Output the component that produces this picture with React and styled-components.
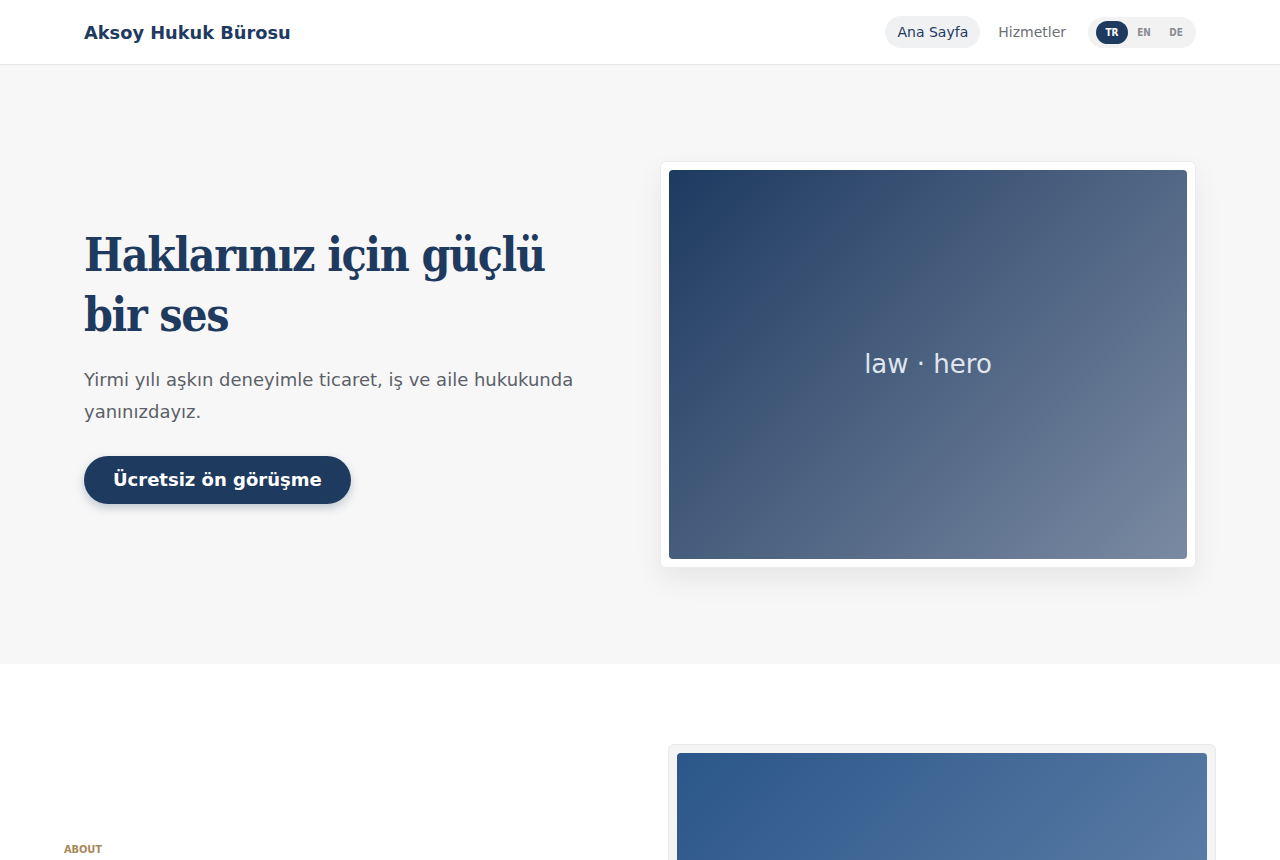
import React, { useState } from 'react';
import styled, { createGlobalStyle } from 'styled-components';

const NAVY = '#1f3a5f';
const GOLD = '#a8885a';
const MUTED = '#5b6068';

const GlobalStyle = createGlobalStyle`
  *, *::before, *::after { box-sizing: border-box; }
  body {
    margin: 0;
    background: #fff;
    font-family: "DejaVu Sans", "Noto Sans", sans-serif;
    color: ${NAVY};
  }
`;

const Header = styled.header`
  height: 65px;
  background: #fff;
  border-bottom: 1px solid #e6e6e6;
`;

const HeaderInner = styled.div`
  max-width: 1160px;
  height: 100%;
  margin: 0 auto;
  padding: 0 24px;
  display: flex;
  align-items: center;
  justify-content: space-between;
`;

const Brand = styled.a`
  font-size: 17.8px;
  font-weight: 700;
  color: ${NAVY};
  text-decoration: none;
`;

const Nav = styled.nav`
  display: flex;
  align-items: center;
  gap: 6px;
`;

const NavLink = styled.a`
  display: inline-flex;
  align-items: center;
  height: 32px;
  padding: 0 12px;
  border-radius: 999px;
  font-size: 14px;
  text-decoration: none;
  color: ${({ $active }) => ($active ? NAVY : '#6b6f76')};
  background: ${({ $active }) => ($active ? '#f0f1f3' : 'transparent')};
`;

const LangSwitch = styled.div`
  display: flex;
  align-items: center;
  margin-left: 4px;
  padding: 4px 4px 4px 8px;
  border-radius: 999px;
  background: #f2f2f3;
`;

const LangButton = styled.button`
  border: none;
  cursor: pointer;
  width: 32px;
  height: 23px;
  padding: 0;
  border-radius: 999px;
  font-family: "DejaVu Sans Condensed", "DejaVu Sans", sans-serif;
  font-size: 10px;
  font-weight: 700;
  background: ${({ $active }) => ($active ? NAVY : 'transparent')};
  color: ${({ $active }) => ($active ? '#fff' : '#8a8d92')};
`;

const Hero = styled.section`
  background: #f7f7f7;
  padding: 96px 0;
`;

const Container = styled.div`
  max-width: ${({ $wide }) => ($wide ? '1200px' : '1160px')};
  margin: 0 auto;
  padding: 0 24px;
  display: grid;
  grid-template-columns: 1fr 1fr;
  gap: ${({ $wide }) => ($wide ? '56px' : '40px')};
  align-items: center;
`;

const Copy = styled.div`
  display: flex;
  flex-direction: column;
  align-items: flex-start;
`;

const Title = styled.h1`
  margin: 0 0 19px;
  max-width: 500px;
  font-family: "DejaVu Serif Condensed", "DejaVu Serif", serif;
  font-size: 46px;
  font-weight: 700;
  line-height: 60px;
  letter-spacing: -0.03em;
  color: ${NAVY};
`;

const Lead = styled.p`
  margin: 0 0 28px;
  max-width: 500px;
  font-size: 18px;
  line-height: 32px;
  color: ${MUTED};
`;

const Cta = styled.a`
  display: inline-flex;
  align-items: center;
  height: 48px;
  padding: 0 29px;
  border-radius: 999px;
  background: ${NAVY};
  color: #fff;
  font-size: 18px;
  font-weight: 700;
  text-decoration: none;
  box-shadow: 0 4px 10px rgba(31, 58, 95, 0.25);
`;

const Frame = styled.figure`
  margin: 0;
  padding: 8px;
  border-radius: 6px;
  background: ${({ $tone }) => ($tone === 'soft' ? '#f4f4f4' : '#fff')};
  border: 1px solid ${({ $tone }) => ($tone === 'soft' ? '#e9e9e9' : '#ececec')};
  box-shadow: ${({ $tone }) => ($tone === 'soft' ? 'none' : '0 12px 28px rgba(0, 0, 0, 0.07)')};
`;

const Picture = styled.div`
  aspect-ratio: 4 / 3;
  border-radius: 4px;
  display: flex;
  align-items: center;
  justify-content: center;
  background: linear-gradient(135deg, ${({ $from }) => $from}, ${({ $to }) => $to});
  color: rgba(240, 244, 250, 0.92);
  font-size: 26px;
`;

const About = styled.section`
  background: #fff;
  padding: 80px 0;
`;

const Eyebrow = styled.span`
  display: block;
  margin-bottom: 16px;
  font-family: "DejaVu Sans Condensed", "DejaVu Sans", sans-serif;
  font-size: 11px;
  line-height: 14px;
  font-weight: 700;
  letter-spacing: -0.01em;
  color: ${GOLD};
`;

const SectionTitle = styled.h2`
  margin: 0 0 16px;
  font-family: "DejaVu Serif Condensed", "DejaVu Serif", serif;
  font-size: 36px;
  line-height: 43px;
  color: ${NAVY};
`;

const Body = styled.p`
  margin: 0;
  font-size: 16px;
  line-height: 28px;
  color: ${MUTED};
`;

const LANGS = ['TR', 'EN', 'DE'];

export default function App() {
  const [lang, setLang] = useState('TR');

  return (
    <>
      <GlobalStyle />
      <Header>
        <HeaderInner>
          <Brand href="#">Aksoy Hukuk Bürosu</Brand>
          <Nav>
            <NavLink href="#" $active>Ana Sayfa</NavLink>
            <NavLink href="#">Hizmetler</NavLink>
            <LangSwitch>
              {LANGS.map((l) => (
                <LangButton key={l} $active={lang === l} onClick={() => setLang(l)}>
                  {l}
                </LangButton>
              ))}
            </LangSwitch>
          </Nav>
        </HeaderInner>
      </Header>

      <Hero>
        <Container>
          <Copy>
            <Title>Haklarınız için güçlü bir ses</Title>
            <Lead>Yirmi yılı aşkın deneyimle ticaret, iş ve aile hukukunda yanınızdayız.</Lead>
            <Cta href="#">Ücretsiz ön görüşme</Cta>
          </Copy>
          <Frame>
            <Picture $from="#1e3a60" $to="#7a8aa2">law · hero</Picture>
          </Frame>
        </Container>
      </Hero>

      <About>
        <Container $wide>
          <Copy>
            <Eyebrow>ABOUT</Eyebrow>
            <SectionTitle>Güvenilir, şeffaf ve sonuç odaklı</SectionTitle>
            <Body>
              Büromuz, müvekkillerine her aşamada açık iletişim ve titiz bir hukuki
              destek sunar. Her dosyayı kendi davamız gibi özenle takip eder, sizi
              sürecin her adımında bilgilendiririz.
            </Body>
          </Copy>
          <Frame $tone="soft">
            <Picture $from="#2a5689" $to="#6f8bb0">law · about</Picture>
          </Frame>
        </Container>
      </About>
    </>
  );
}
